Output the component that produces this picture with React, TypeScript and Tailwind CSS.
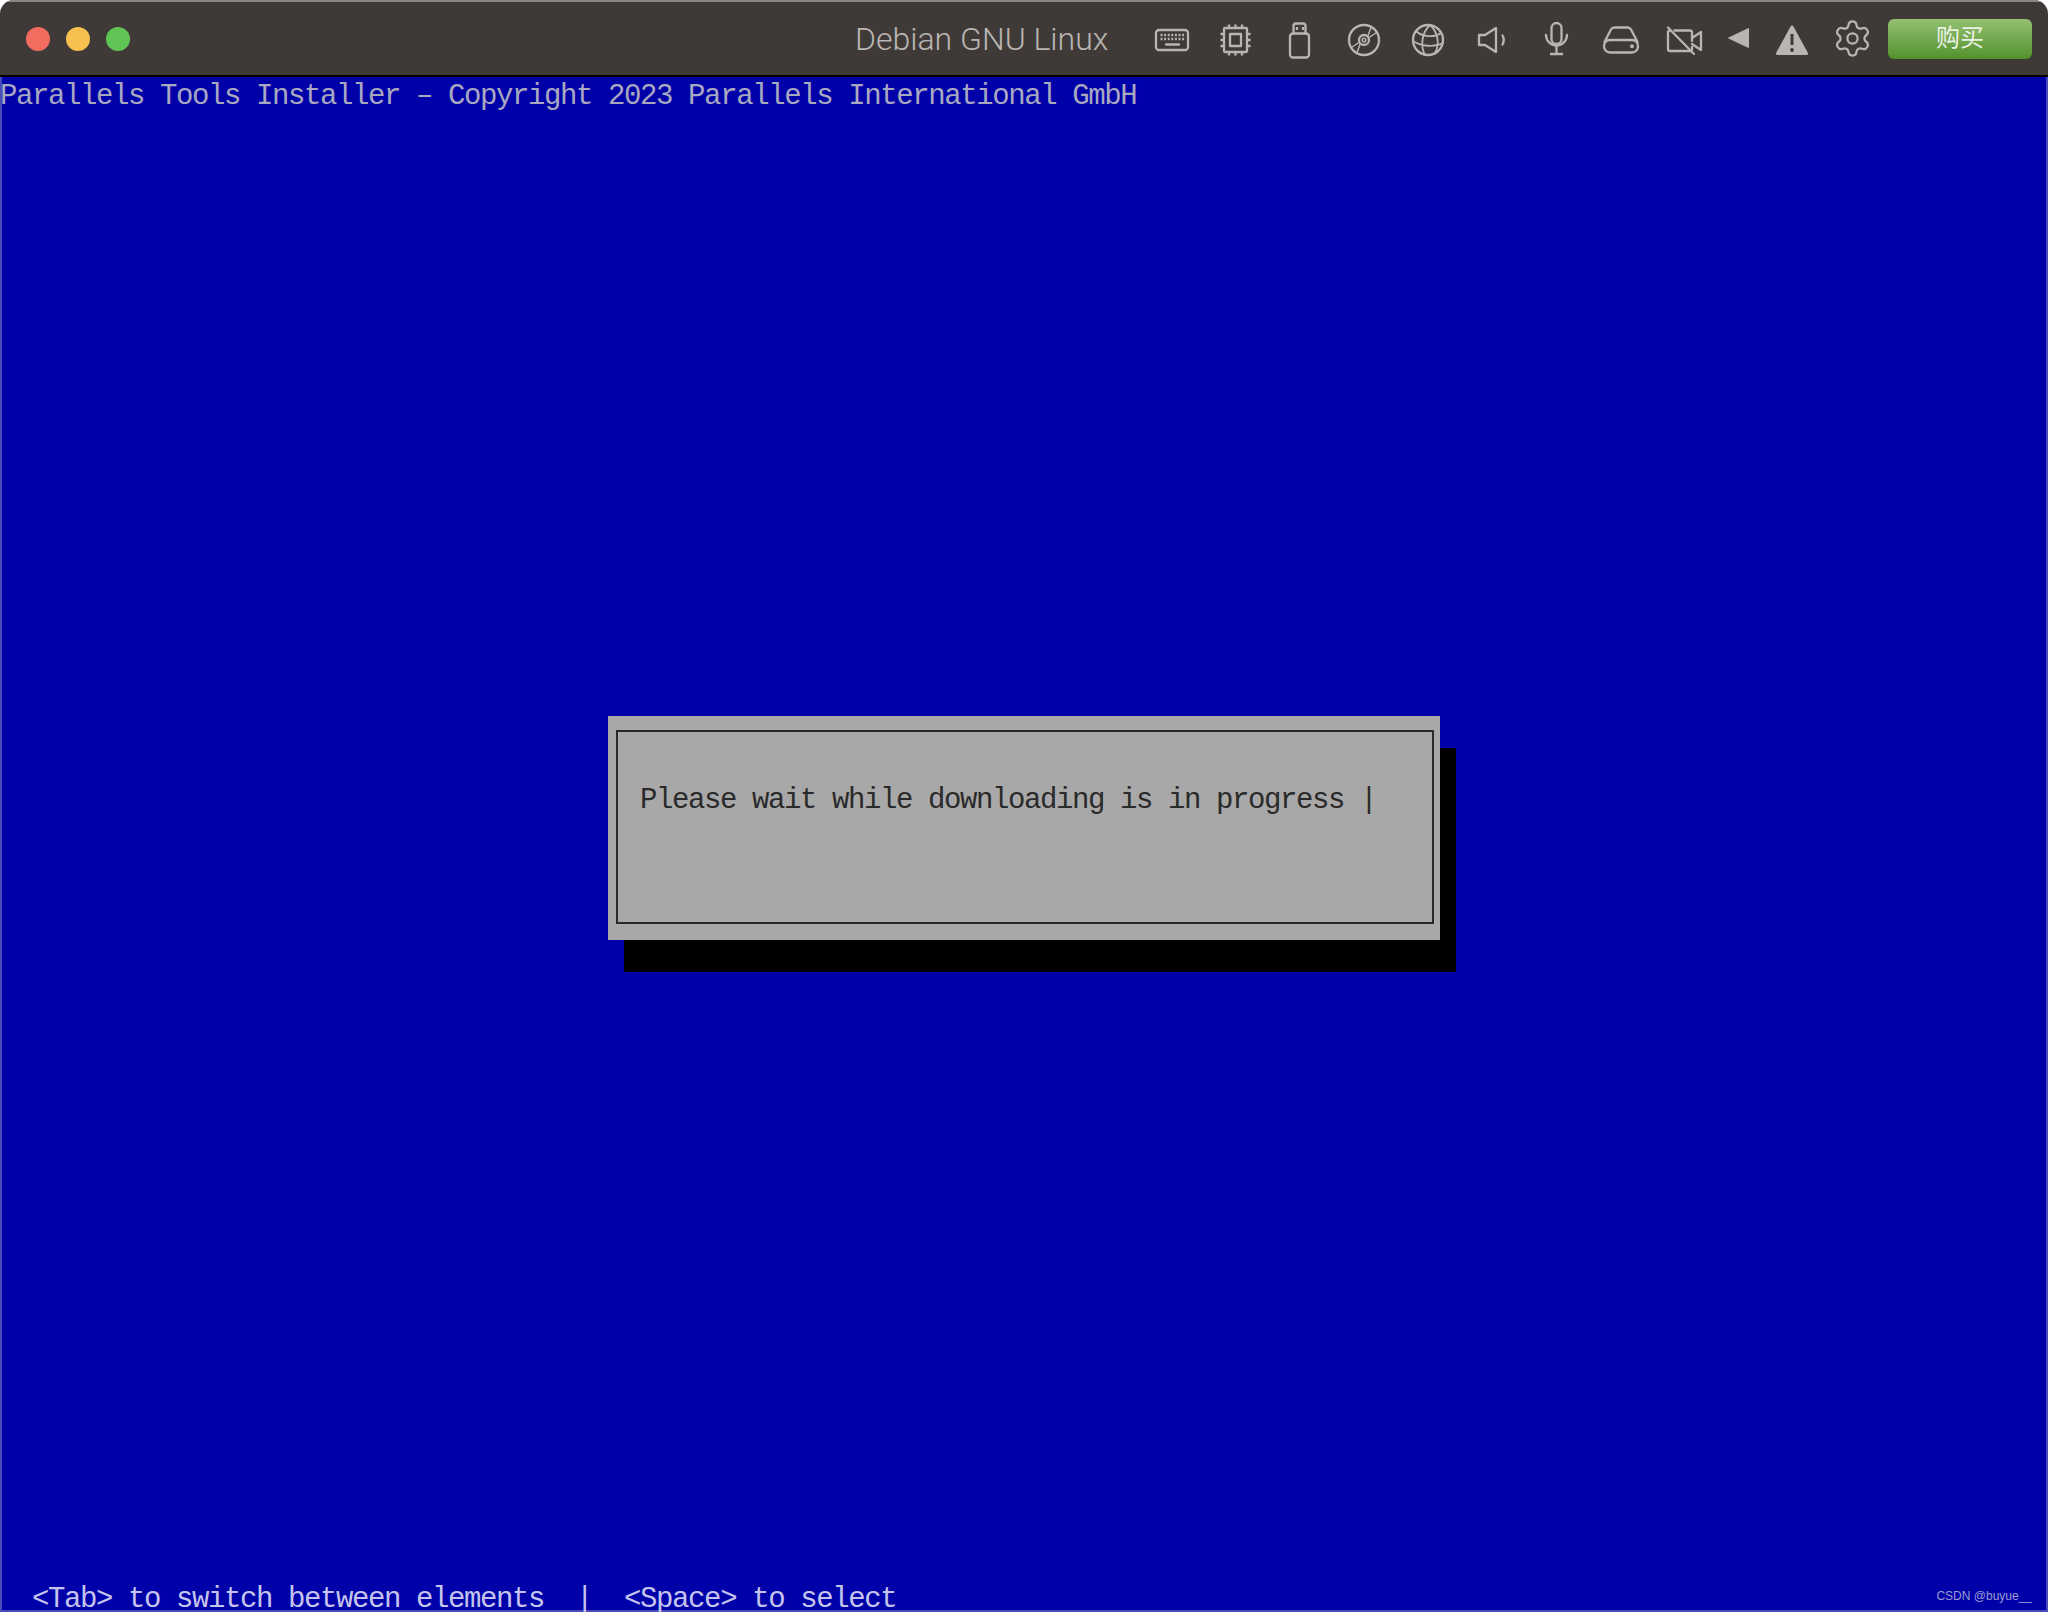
import React from 'react';
import { Settings } from 'lucide-react';

const stroke = {
  fill: 'none',
  stroke: '#b9b5b2',
  strokeWidth: 2.3,
  strokeLinecap: 'round' as const,
  strokeLinejoin: 'round' as const,
};

const Icon: React.FC<{ children: React.ReactNode }> = ({ children }) => (
  <svg width="40" height="40" viewBox="0 0 40 40" {...stroke}>
    {children}
  </svg>
);

const Keyboard = () => (
  <Icon>
    <rect x="4" y="10" width="32" height="20" rx="3" />
    <path d="M8.5 15H33M8.5 19H33" strokeWidth="2.4" strokeDasharray="2 1.6" strokeLinecap="butt" />
    <path d="M14 24.5H27" />
  </Icon>
);

const Chip = () => (
  <Icon>
    <rect x="8" y="8" width="23" height="24" rx="1" />
    <rect x="14" y="14" width="11" height="12" />
    <path d="M13 4.5V7M19.5 4.5V7M26 4.5V7M13 33V35.5M19.5 33V35.5M26 33V35.5M4.5 14H7M4.5 20H7M4.5 26H7M32 14H34.5M32 20H34.5M32 26H34.5" strokeLinecap="butt" />
  </Icon>
);

const Usb = () => (
  <Icon>
    <rect x="10" y="13.5" width="19" height="24" rx="3" />
    <path d="M13.5 13.5V6a2.5 2.5 0 0 1 2.5-2.5h7a2.5 2.5 0 0 1 2.5 2.5v7.5" />
    <path d="M17 7V10M23 7V10" strokeLinecap="butt" />
  </Icon>
);

const Disc = () => (
  <Icon>
    <circle cx="20" cy="20" r="15" />
    <circle cx="20" cy="20" r="5" />
    <circle cx="20" cy="20" r="1.8" strokeWidth="1.5" />
    <path d="M24 15.5L27 7.5M25 17.5L32.5 12.5M16 24.5L13 32.5M15 22.5L7.5 27.5" strokeWidth="1.5" />
  </Icon>
);

const Globe = () => (
  <Icon>
    <circle cx="20" cy="20" r="15" />
    <path d="M22 5C14 12 12 26 17 35M22 5C30 12 32 24 27 33M8 11C14 17 26 18 33 13M5 21C12 26 26 28 35 23" strokeWidth="1.8" />
  </Icon>
);

const Speaker = () => (
  <Icon>
    <path d="M7 15H13L24 8V32L13 25H7Z" />
    <path d="M30.5 15.5Q33 20 30.5 24.5" />
  </Icon>
);

const Mic = () => (
  <Icon>
    <rect x="15.5" y="3" width="10" height="21" rx="5" />
    <path d="M10 15a10.5 10.5 0 0 0 21 0" />
    <path d="M20.5 25.5V34M14 34H27" strokeLinecap="butt" />
  </Icon>
);

const Drive = () => (
  <Icon>
    <path d="M4.5 22L11 9.5A4 4 0 0 1 14.5 7.5H27.5A4 4 0 0 1 31 9.5L37.5 22" />
    <rect x="4" y="20" width="34" height="12.5" rx="6" />
    <circle cx="32" cy="26.3" r="2" fill="#b9b5b2" stroke="none" />
  </Icon>
);

const CameraOff = () => (
  <Icon>
    <path d="M10.5 10.5H26a2 2 0 0 1 2 2V21M28 27V29a2 2 0 0 1-2 2H6a2 2 0 0 1-2-2V12a2 2 0 0 1 2-1.5" />
    <path d="M28 18L37 12V30L28 24" />
    <path d="M4 7.5L30 34" />
  </Icon>
);

const Back = () => (
  <svg width="40" height="40" viewBox="0 0 40 40">
    <path d="M10.5 18L30.5 8.5V27.5Z" fill="#b9b5b2" stroke="#b9b5b2" strokeWidth="1" strokeLinejoin="round" />
  </svg>
);

const Warning = () => (
  <svg width="40" height="40" viewBox="0 0 40 40">
    <path d="M20 7L34.5 33.5H5.5Z" fill="#b9b5b2" stroke="#b9b5b2" strokeWidth="3" strokeLinejoin="round" />
    <path d="M20 14V25" stroke="#3f3a38" strokeWidth="3" />
    <circle cx="20" cy="30" r="1.9" fill="#3f3a38" />
  </svg>
);

const mono = "font-['Liberation_Mono','DejaVu_Sans_Mono',monospace] text-[29px] tracking-[-1.4px] leading-[32px] whitespace-pre";

export default function App() {
  return (
    <div className="h-[1612px] w-[2048px] bg-white">
      <div className="flex h-full flex-col overflow-hidden rounded-t-[14px]">
        {/* Window title bar */}
        <div className="flex h-[77px] shrink-0 items-center border-t-2 border-b-2 border-t-[#8b8784] border-b-black bg-[#3f3a38]">
          <div className="ml-[26px] flex gap-4">
            <div className="h-6 w-6 rounded-full bg-[#f26d60]" />
            <div className="h-6 w-6 rounded-full bg-[#f7c04f]" />
            <div className="h-6 w-6 rounded-full bg-[#60c555]" />
          </div>
          <div className="ml-[725px] w-[285px] font-['Roboto',sans-serif] text-[32px] font-light text-[#b9b5b2]">
            Debian GNU Linux
          </div>
          <div className="mt-[3px] flex items-center">
            <div className="flex w-16 justify-center"><Keyboard /></div>
            <div className="flex w-16 justify-center"><Chip /></div>
            <div className="flex w-16 justify-center"><Usb /></div>
            <div className="flex w-16 justify-center"><Disc /></div>
            <div className="flex w-16 justify-center"><Globe /></div>
            <div className="flex w-16 justify-center"><Speaker /></div>
            <div className="flex w-16 justify-center"><Mic /></div>
            <div className="flex w-16 justify-center"><Drive /></div>
            <div className="flex w-16 justify-center"><CameraOff /></div>
            <div className="flex w-11 justify-center"><Back /></div>
            <div className="flex w-16 justify-center"><Warning /></div>
            <div className="mb-1 flex w-14 justify-center text-[#b9b5b2]"><Settings size={41} strokeWidth={1.3} /></div>
          </div>
          <button className="ml-2 flex h-10 w-36 items-center justify-center rounded-[6px] bg-gradient-to-b from-[#93c070] to-[#52922d] pb-[6px] font-['Noto_Sans_CJK_SC',sans-serif] text-[24px] text-[#e9f1e2]">
            购买
          </button>
        </div>

        {/* Guest console, 16x32 character cells */}
        <div className="relative flex flex-1 flex-col overflow-hidden bg-[#0000a9] shadow-[inset_2px_0_0_#4a4ab8,inset_-2px_0_0_#4a4ab8,inset_0_-2px_0_#4a4ab8]">
          <div className={`pt-1 ${mono} text-[#a8a8c0]`}>Parallels Tools Installer – Copyright 2023 Parallels International GmbH</div>

          <div className="ml-[608px] mt-[603px] h-[224px] w-[832px] shrink-0 bg-[#a8a8a8] pb-4 pl-2 pr-[6px] pt-[14px] shadow-[16px_32px_0_0_#000]">
            <div className={`h-full border-2 border-[#2a2a2a] pl-[22px] pt-[53px] ${mono} text-[#2a2a2a]`}>
              Please wait while downloading is in progress |
            </div>
          </div>

          <div className={`mt-auto h-[32px] shrink-0 overflow-hidden pt-1 ${mono} text-[#c4c4ec]`}>  &lt;Tab&gt; to switch between elements  |  &lt;Space&gt; to select</div>

          <div className="absolute bottom-[7px] right-4 font-['Liberation_Sans',sans-serif] text-[12px] text-[#9c9cd4]">CSDN @buyue__</div>
        </div>
      </div>
    </div>
  );
}
